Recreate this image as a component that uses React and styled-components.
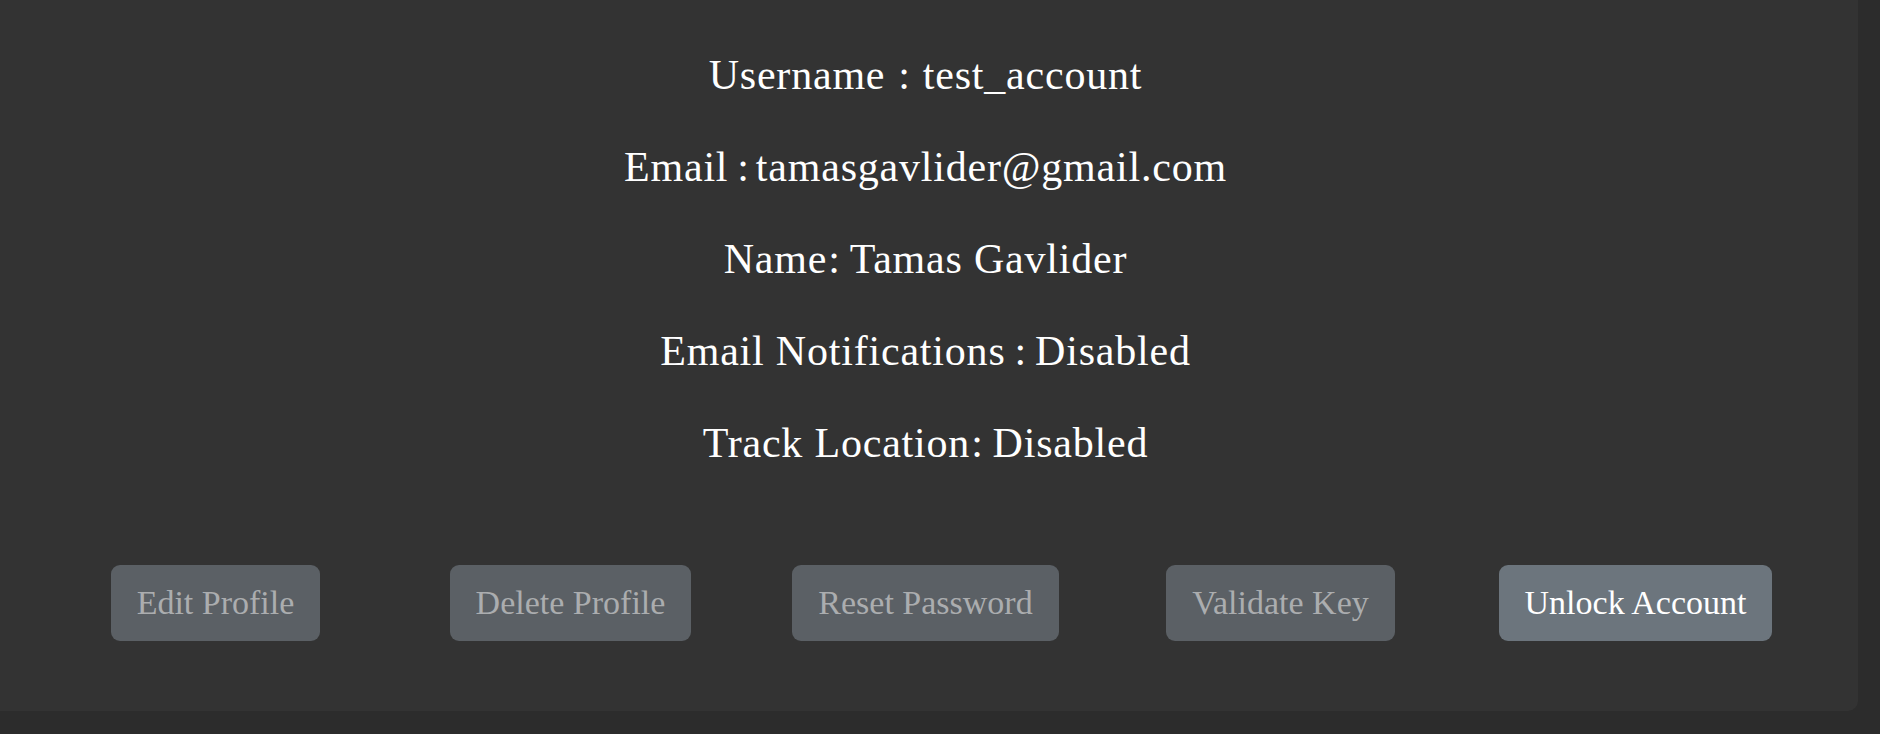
import React from 'react'
import styled, { createGlobalStyle } from 'styled-components'

const GlobalStyle = createGlobalStyle`
  html, body {
    margin: 0;
    padding: 0;
    background: #2c2c2c;
  }
  body {
    font-family: "Liberation Serif", "Noto Sans CJK KR", serif;
  }
`

// before/after: space around the colon, as in the original layout
const fields = [
  { label: 'Username', value: 'test_account', before: 13, after: 12 },
  { label: 'Email', value: 'tamasgavlider@gmail.com', before: 9, after: 6 },
  { label: 'Name', value: 'Tamas Gavlider', before: 1, after: 9 },
  { label: 'Email Notifications', value: 'Disabled', before: 9, after: 8 },
  { label: 'Track Location', value: 'Disabled', before: 1, after: 9 },
]

const actions = [
  { label: 'Edit Profile', disabled: true },
  { label: 'Delete Profile', disabled: true },
  { label: 'Reset Password', disabled: true },
  { label: 'Validate Key', disabled: true },
  { label: 'Unlock Account', disabled: false },
]

export default function App() {
  return (
    <>
      <GlobalStyle />
      <Card>
        <InfoList>
          {fields.map((f) => (
            <InfoLine key={f.label}>
              {f.label}
              <Colon $before={f.before} $after={f.after}>:</Colon>
              {f.value}
            </InfoLine>
          ))}
        </InfoList>
        <ButtonRow>
          {actions.map((a) => (
            <ActionButton key={a.label} disabled={a.disabled}>
              {a.label}
            </ActionButton>
          ))}
        </ButtonRow>
      </Card>
    </>
  )
}

const Card = styled.section`
  width: 1858px;
  box-sizing: border-box;
  background: #333333;
  border-radius: 0 0 10px 0;
  padding: 50px 45px 70px 38px;
  display: flex;
  flex-direction: column;
`

const InfoList = styled.div`
  display: flex;
  flex-direction: column;
  align-items: center;
  gap: 42px;
`

const InfoLine = styled.h3`
  margin: 0;
  font-weight: 400;
  font-size: 42px;
  letter-spacing: 0.8px;
  line-height: 50px;
  color: #ffffff;
  white-space: nowrap;
`

const Colon = styled.span`
  margin-left: ${(p) => p.$before}px;
  margin-right: ${(p) => p.$after}px;
`

const ButtonRow = styled.div`
  margin-top: 97px;
  display: grid;
  grid-template-columns: repeat(5, 1fr);
  justify-items: center;
`

const ActionButton = styled.button`
  font-family: "Liberation Serif", "Noto Sans CJK KR", serif;
  font-size: 34px;
  line-height: 50px;
  padding: 12px 25px;
  border: 1px solid transparent;
  border-radius: 9px;
  background: ${(p) => (p.disabled ? '#5b6065' : '#6c757d')};
  color: ${(p) => (p.disabled ? '#abadaf' : '#ffffff')};
  cursor: ${(p) => (p.disabled ? 'default' : 'pointer')};
  white-space: nowrap;
`
